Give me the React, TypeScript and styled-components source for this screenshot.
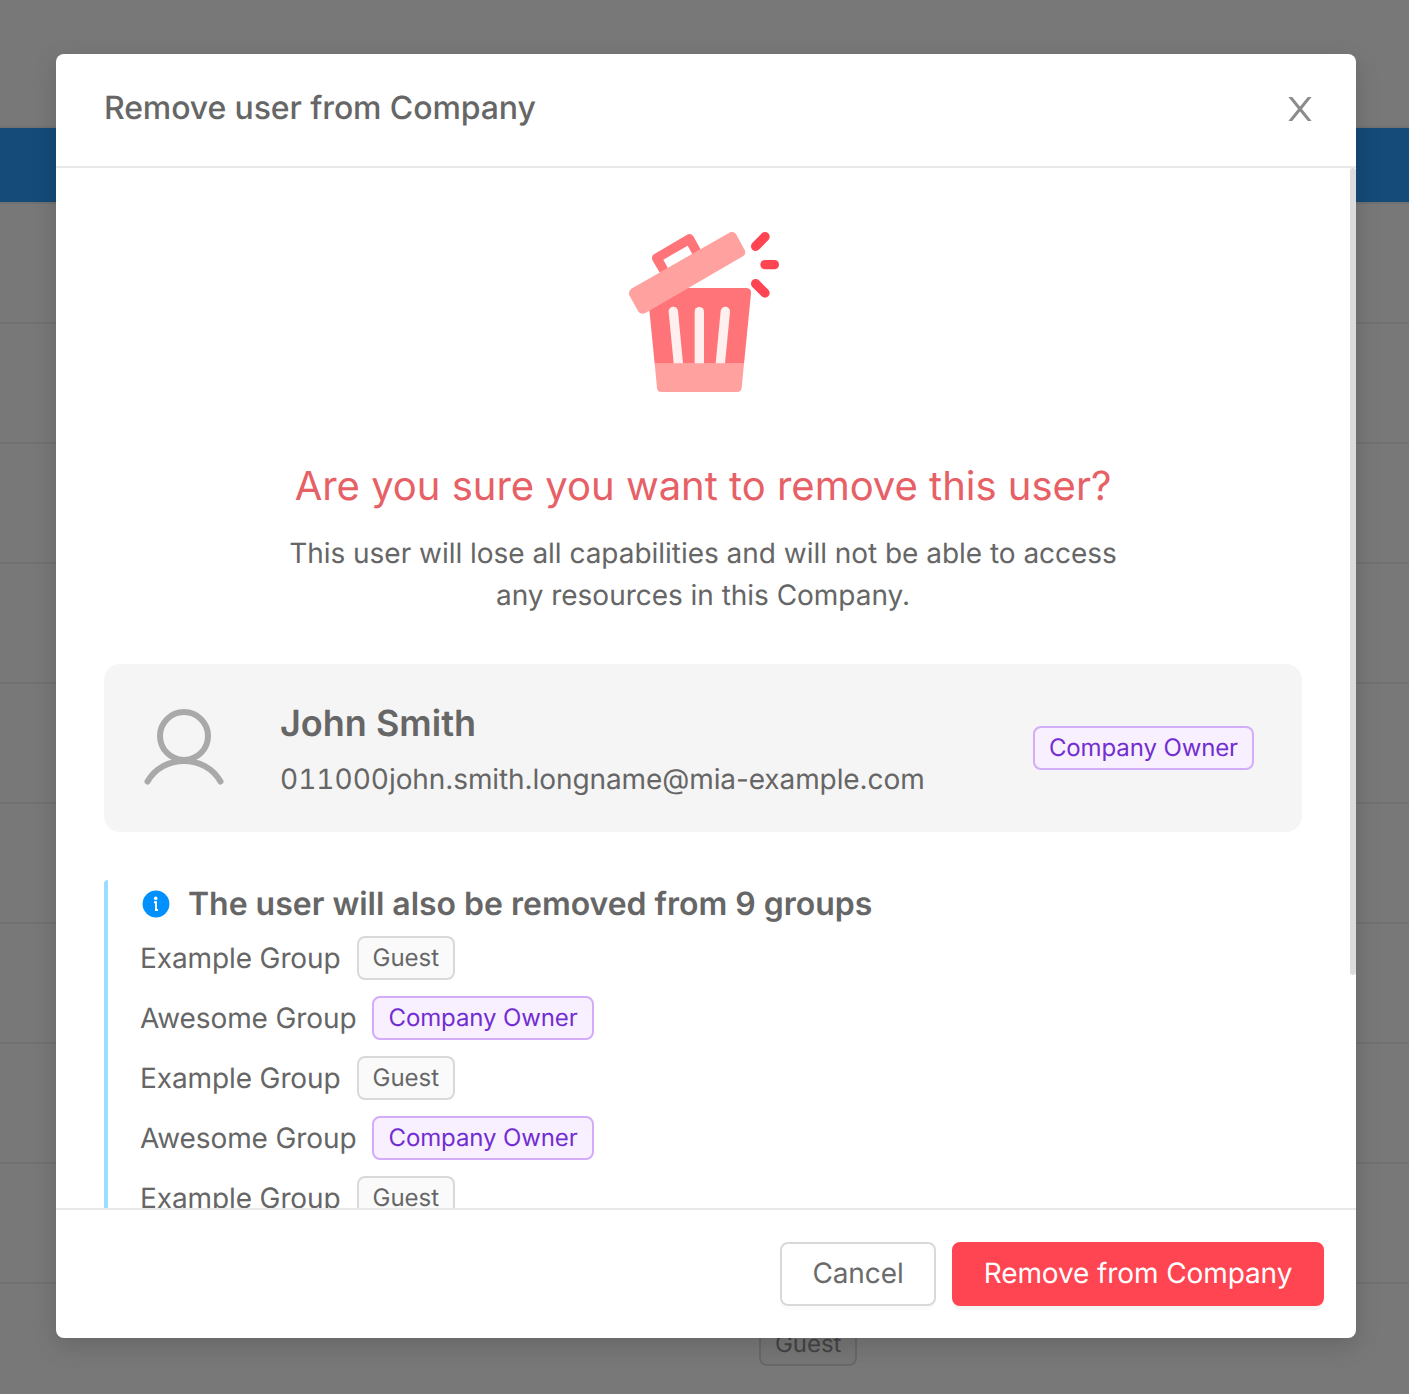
import React from "react";
import styled, { createGlobalStyle } from "styled-components";

const GlobalStyle = createGlobalStyle`
  *, *::before, *::after { box-sizing: border-box; }
  html, body { margin: 0; overflow: hidden; }
  body {
    font-family: Inter, "Liberation Sans", sans-serif;
    font-size: 28px;
    font-weight: 400;
    text-rendering: geometricPrecision;
    color: #666;
    background: #787878;
    -webkit-font-smoothing: antialiased;
  }
  h1, h2, h3, p, ul { margin: 0; padding: 0; }
`;

const Screen = styled.div`
  position: relative;
  width: 1409px;
  height: 1394px;
  overflow: hidden;
`;

const Backdrop = styled.div`
  display: flex;
  flex-direction: column;
  background: #787878;
`;

const TopBar = styled.div`
  height: 128px;
  border-bottom: 2px solid #717171;
`;

const BlueBar = styled.div`
  height: 74px;
  background: #144b78;
`;

const TableRow = styled.div`
  display: flex;
  align-items: center;
  flex: none;
  height: 120px;
  padding: 2px 0 0 759px;
  border-top: 2px solid #707070;
`;

const ModalLayer = styled.div`
  position: absolute;
  inset: 0;
  display: flex;
  align-items: flex-start;
  padding: 54px 53px 0 56px;
`;

const Dialog = styled.section`
  display: flex;
  flex-direction: column;
  width: 1300px;
  height: 1284px;
  background: #fff;
  border-radius: 8px;
  box-shadow: 0 8px 24px rgba(0, 0, 0, 0.15);
`;

const DialogHeader = styled.header`
  display: flex;
  justify-content: space-between;
  align-items: center;
  height: 114px;
  padding: 0 42px 4px 48px;
  border-bottom: 2px solid #e8e8e8;
`;

const DialogTitle = styled.h1`
  font-size: 32px;
  line-height: 44px;
  font-weight: 500;
  letter-spacing: -0.11px;
`;

const CloseButton = styled.button`
  display: flex;
  padding: 1px 0 0;
  border: 0;
  background: none;
`;

const DialogBody = styled.div`
  display: flex;
  flex: none;
  height: 1040px;
  overflow: hidden;
`;

const BodyContent = styled.div`
  flex: 1;
  display: flex;
  flex-direction: column;
  align-items: stretch;
  padding: 64px 48px 0;
`;

const ScrollThumb = styled.div`
  width: 6px;
  height: 807px;
  border-radius: 3px;
  background: #dcdcdc;
`;

const Illustration = styled.div`
  display: flex;
  justify-content: center;
  height: 160px;
`;

const Question = styled.h2`
  margin-top: 66px;
  font-size: 40px;
  line-height: 56px;
  font-weight: 400;
  text-align: center;
  letter-spacing: -0.01px;
  color: #e66066;
`;

const Explanation = styled.p`
  margin: 18px auto 0;
  width: 860px;
  line-height: 42px;
  letter-spacing: -0.03px;
  text-align: center;
`;

const UserCard = styled.div`
  display: flex;
  align-items: center;
  flex: none;
  height: 168px;
  margin-top: 48px;
  padding: 0 48px 0 40px;
  border-radius: 16px;
  background: #f5f5f5;
`;

const UserText = styled.div`
  flex: 1;
  margin-left: 56px;
`;

const UserName = styled.h3`
  font-size: 36px;
  line-height: 56px;
  font-weight: 600;
`;

const UserMail = styled.p`
  line-height: 44px;
  padding-top: 6px;
  letter-spacing: -0.09px;
`;

const MailDigits = styled.span`
  font-variant-numeric: tabular-nums;
  letter-spacing: 0;
`;

const Tag = styled.span<{ $kind: "guest" | "owner" | "dimmed" }>`
  display: inline-flex;
  align-items: center;
  flex: none;
  height: 44px;
  padding: 0 14px;
  border: 2px solid ${(p) => ({ guest: "#d9d9d9", owner: "#d3adf7", dimmed: "#686868" })[p.$kind]};
  border-radius: 8px;
  background: ${(p) => ({ guest: "#fafafa", owner: "#f9f0ff", dimmed: "#767676" })[p.$kind]};
  color: ${(p) => ({ guest: "#666", owner: "#722ed1", dimmed: "#444444" })[p.$kind]};
  font-size: 24px;
  line-height: 40px;
  letter-spacing: ${(p) => (p.$kind === "owner" ? "-0.12px" : "-0.04px")};
`;

const Notice = styled.div`
  flex: none;
  margin-top: 48px;
  padding-left: 32px;
  border-left: 4px solid #99ddff;
  border-radius: 4px 0 0 4px;
`;

const NoticeTitle = styled.h3`
  display: flex;
  align-items: center;
  gap: 16px;
  height: 48px;
  font-size: 32px;
  line-height: 48px;
  font-weight: 600;
  letter-spacing: -0.02px;
`;

const GroupList = styled.ul`
  display: flex;
  flex-direction: column;
  gap: 16px;
  padding-top: 8px;
  list-style: none;
`;

const GroupRow = styled.li`
  display: flex;
  align-items: center;
  gap: 16px;
  height: 44px;
  line-height: 44px;
  letter-spacing: -0.11px;
`;

const DialogFooter = styled.footer`
  display: flex;
  justify-content: flex-end;
  gap: 16px;
  padding: 32px;
  border-top: 2px solid #e8e8e8;
`;

const Button = styled.button<{ $danger?: boolean }>`
  height: 64px;
  padding: 0 0 2px;
  width: ${(p) => (p.$danger ? 372 : 156)}px;
  border: 2px solid ${(p) => (p.$danger ? "#ff4452" : "#d9d9d9")};
  border-radius: 8px;
  background: ${(p) => (p.$danger ? "#ff4452" : "#fff")};
  color: ${(p) => (p.$danger ? "#fff" : "#6b6b6b")};
  font: inherit;
  text-rendering: inherit;
  letter-spacing: -0.1px;
  white-space: nowrap;
  box-shadow: 0 4px 0 rgba(0, 0, 0, ${(p) => (p.$danger ? 0.045 : 0.016)});
`;

const TrashIcon = () => (
  <svg width="152" height="160" viewBox="81 66 456 480">
    <path
      fillRule="evenodd"
      fill="#ff7478"
      d="M180 189 L158 152 Q152 140 162 133 L260 75 Q272 68 280 79 L303 120 L278 134 L263 107 L190 149 L204 175Z"
    />
    <path fill="#ff7478" d="M148 300 L262 234 H440 Q454 235 453 250 L432 461 H164Z" />
    <path fill="#ffa19f" d="M164 460 H432 L425 534 Q423 546 412 546 H184 Q172 546 171 534Z" />
    <path
      fill="#ffa19f"
      d="M94 236 L388 68 Q400 62 408 72 L434 120 Q439 131 430 138 L136 309 Q124 315 116 306 L89 258 Q83 244 94 236Z"
    />
    <g fill="#fff0ef">
      <path d="M206 306 A14 14 0 0 1 234 303 L249 460 H221Z" />
      <path d="M284 305 A14 14 0 0 1 312 305 V460 H284Z" />
      <path d="M362 303 A14 14 0 0 1 390 306 L375 460 H347Z" />
    </g>
    <g stroke="#ff4452" strokeWidth="28" strokeLinecap="round">
      <path d="M467 109 L495 80" />
      <path d="M495 164 H523" />
      <path d="M467 221 L495 249" />
    </g>
  </svg>
);

const UserIcon = () => (
  <svg width="80" height="80" viewBox="0 0 80 80" fill="none" stroke="#a9a9a9" strokeWidth="6" strokeLinecap="round">
    <circle cx="40" cy="28" r="24" />
    <path d="M3.5 73.5 C19 46 61 46 76.5 73.5" />
  </svg>
);

const InfoIcon = () => (
  <svg width="32" height="32" viewBox="0 0 32 32">
    <circle cx="16" cy="16" r="13.4" fill="#0091ff" />
    <circle cx="15.7" cy="10.4" r="1.8" fill="#fff" />
    <path d="M14 14.2 H16 V22 H18" fill="none" stroke="#fff" strokeWidth="2" />
  </svg>
);

const CloseIcon = () => (
  <svg width="28" height="28" viewBox="0 0 28 28" fill="#8c8c8c">
    <path d="M2.4 2 H6.2 L14 11.4 L21.8 2 H25.6 L16 14 L25.6 26 H21.8 L14 16.6 L6.2 26 H2.4 L12 14Z" />
  </svg>
);

const groups = [
  { name: "Example Group", owner: false },
  { name: "Awesome Group", owner: true },
  { name: "Example Group", owner: false },
  { name: "Awesome Group", owner: true },
  { name: "Example Group", owner: false },
];

export default function App() {
  return (
    <Screen>
      <GlobalStyle />
      <Backdrop>
        <TopBar />
        <BlueBar />
        {Array.from({ length: 10 }, (_, i) => (
          <TableRow key={i}>{i === 9 && <Tag $kind="dimmed">Guest</Tag>}</TableRow>
        ))}
      </Backdrop>
      <ModalLayer>
        <Dialog role="dialog">
          <DialogHeader>
            <DialogTitle>Remove user from Company</DialogTitle>
            <CloseButton aria-label="Close">
              <CloseIcon />
            </CloseButton>
          </DialogHeader>
          <DialogBody>
            <BodyContent>
              <Illustration>
                <TrashIcon />
              </Illustration>
              <Question>Are you sure you want to remove this user?</Question>
              <Explanation>
                This user will lose all capabilities and will not be able to access any resources in this Company.
              </Explanation>
              <UserCard>
                <UserIcon />
                <UserText>
                  <UserName>John Smith</UserName>
                  <UserMail>
                    <MailDigits>011000</MailDigits>john.smith.longname@mia-example.com
                  </UserMail>
                </UserText>
                <Tag $kind="owner">Company Owner</Tag>
              </UserCard>
              <Notice>
                <NoticeTitle>
                  <InfoIcon />
                  The user will also be removed from 9 groups
                </NoticeTitle>
                <GroupList>
                  {groups.map((g, i) => (
                    <GroupRow key={i}>
                      {g.name}
                      <Tag $kind={g.owner ? "owner" : "guest"}>{g.owner ? "Company Owner" : "Guest"}</Tag>
                    </GroupRow>
                  ))}
                </GroupList>
              </Notice>
            </BodyContent>
            <ScrollThumb />
          </DialogBody>
          <DialogFooter>
            <Button>Cancel</Button>
            <Button $danger>Remove from Company</Button>
          </DialogFooter>
        </Dialog>
      </ModalLayer>
    </Screen>
  );
}
